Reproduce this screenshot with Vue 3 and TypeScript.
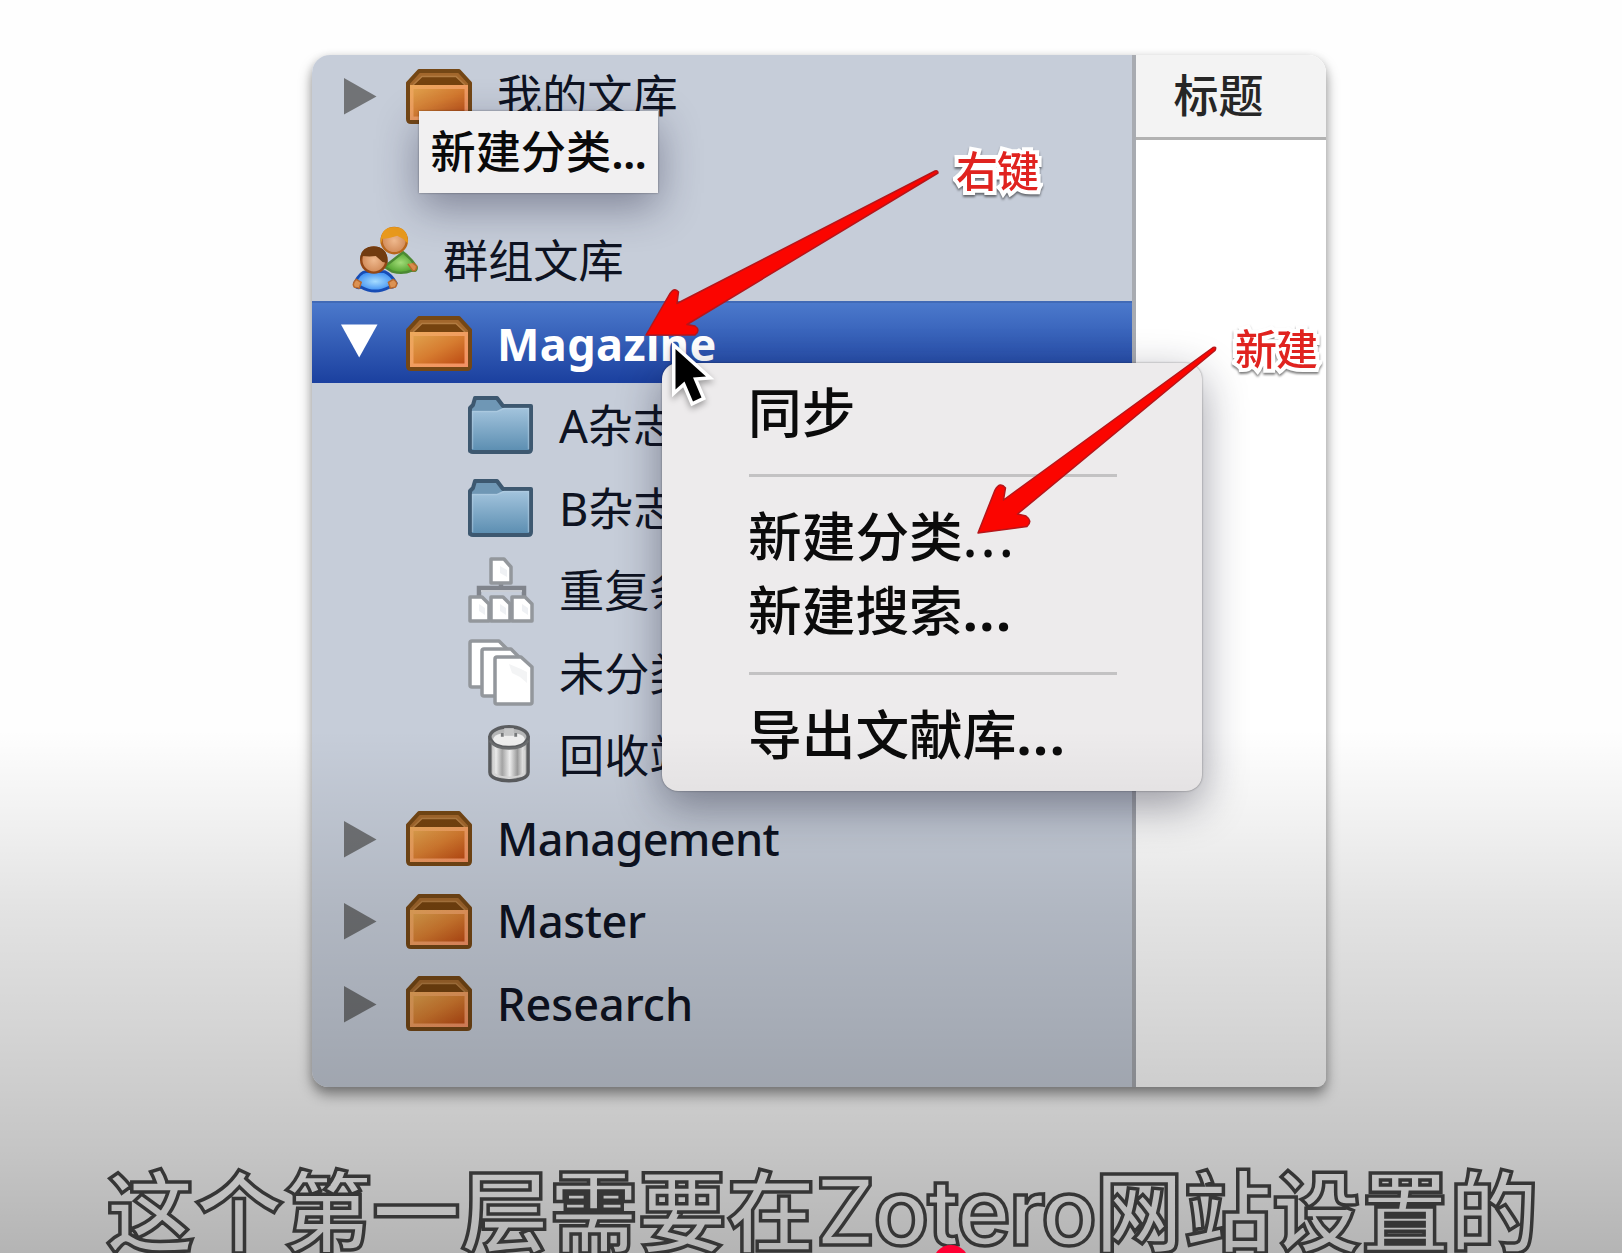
<script setup lang="ts">
type IconKind = 'box' | 'folder' | 'duplicates' | 'unfiled' | 'trash' | 'group' | 'none'

interface Row {
  label: string
  icon: IconKind
  level: 'root' | 'child' | 'group' | 'blank'
  twisty?: 'closed' | 'open'
  tracking?: number
}

const rows: Row[] = [
  { label: '我的文库', icon: 'box', level: 'root', twisty: 'closed' },
  { label: '', icon: 'none', level: 'blank' },
  { label: '群组文库', icon: 'group', level: 'group' },
  { label: 'Magazine', icon: 'box', level: 'root', twisty: 'open', tracking: 0.4 },
  { label: 'A杂志', icon: 'folder', level: 'child' },
  { label: 'B杂志', icon: 'folder', level: 'child' },
  { label: '重复条目', icon: 'duplicates', level: 'child' },
  { label: '未分类条目', icon: 'unfiled', level: 'child' },
  { label: '回收站', icon: 'trash', level: 'child' },
  { label: 'Management', icon: 'box', level: 'root', twisty: 'closed', tracking: -0.65 },
  { label: 'Master', icon: 'box', level: 'root', twisty: 'closed', tracking: -0.4 },
  { label: 'Research', icon: 'box', level: 'root', twisty: 'closed', tracking: 0 },
]
</script>

<template>
  <div class="stage">
    <svg class="defs" width="0" height="0" aria-hidden="true">
      <defs>
        <linearGradient id="boxFront" x1="0" y1="0" x2="1" y2="1">
          <stop offset="0" stop-color="#e0a04c" />
          <stop offset="0.5" stop-color="#d67c30" />
          <stop offset="1" stop-color="#bd4c14" />
        </linearGradient>
        <linearGradient id="boxRim" x1="0" y1="0" x2="1" y2="1">
          <stop offset="0" stop-color="#eda95c" />
          <stop offset="1" stop-color="#f39064" />
        </linearGradient>
        <linearGradient id="folderFill" x1="0" y1="0" x2="0" y2="1">
          <stop offset="0" stop-color="#a3c4dd" />
          <stop offset="1" stop-color="#5d8fb2" />
        </linearGradient>
        <linearGradient id="canFill" x1="0" y1="0" x2="1" y2="0">
          <stop offset="0" stop-color="#aaa" />
          <stop offset="0.16" stop-color="#eee" />
          <stop offset="0.32" stop-color="#a6a6a6" />
          <stop offset="0.52" stop-color="#f1f1f1" />
          <stop offset="0.72" stop-color="#9c9c9c" />
          <stop offset="0.86" stop-color="#e5e5e5" />
          <stop offset="1" stop-color="#999" />
        </linearGradient>
        <radialGradient id="blueShirt">
          <stop offset="0" stop-color="#a5dcff" />
          <stop offset="1" stop-color="#3c8df2" />
        </radialGradient>
        <radialGradient id="greenShirt">
          <stop offset="0" stop-color="#a2dc78" />
          <stop offset="1" stop-color="#4fa02c" />
        </radialGradient>
        <radialGradient id="face">
          <stop offset="0" stop-color="#efb98e" />
          <stop offset="1" stop-color="#d18a58" />
        </radialGradient>
      </defs>
    </svg>

    <div class="window">
      <aside class="sidebar">
        <div
          v-for="(row, i) in rows"
          :key="i"
          class="row"
          :class="[row.level, { selected: row.twisty === 'open', latin: row.tracking !== undefined }]"
        >
          <span v-if="row.level === 'root'" class="twisty">
            <svg v-if="row.twisty === 'closed'" width="37" height="38" viewBox="0 0 37 38">
              <path d="M2 1 L34.500 19.500 L2 37.500 Z" fill="#717376" />
            </svg>
            <svg v-else class="open" width="37" height="38" viewBox="0 0 37 38">
              <path d="M0 1.500 H36.500 L18.200 34.500 Z" fill="#fff" />
            </svg>
          </span>

          <svg v-if="row.icon === 'box'" class="icon" width="68" height="56" viewBox="0 0 68 56">
            <path d="M14 2 H54 L65 14 V50 Q65 53 62 53 H6 Q3 53 3 50 V14 Z" fill="#a2672c" stroke="#744715" stroke-width="4" stroke-linejoin="round" />
            <path d="M17 8 H51 L60 16 H8 Z" fill="#75430f" />
            <path d="M8 16 L17 7.500 H51 L60 16" fill="none" stroke="#b27c42" stroke-width="1.500" />
            <rect x="5" y="16" width="58" height="35" fill="url(#boxRim)" />
            <rect x="8.500" y="20" width="51" height="27.500" fill="url(#boxFront)" />
          </svg>

          <svg v-else-if="row.icon === 'folder'" class="icon" width="68" height="62" viewBox="0 0 68 62">
            <path d="M3 57 V14 L6 11 L8 4 H30 L36 12 H64 V55 Q64 58 61 58 H6 Q3 58 3 55 Z" fill="#6f97b5" stroke="#3d5870" stroke-width="4" stroke-linejoin="round" />
            <path d="M5 17 H30 L36 14 H62 V56 H5 Z" fill="url(#folderFill)" />
            <path d="M5.500 55 V17.500 H30 L37 14.500 H61.500 V55" fill="none" stroke="#b7d2e5" stroke-width="1.500" opacity="0.5" />
          </svg>

          <svg v-else-if="row.icon === 'duplicates'" class="icon" width="68" height="68" viewBox="0 0 68 68">
            <path d="M12 40 V32 H34 V26 M34 32 H57 V40" fill="none" stroke="#80848c" stroke-width="4.500" />
            <path d="M14 35 H55" stroke="#c9cdd4" stroke-width="2" />
            <g fill="#fff" stroke="#93979c" stroke-width="3.500" stroke-linejoin="round">
              <path d="M24 3 H37 L44 11 V27 H24 Z" />
              <path d="M3 41 H15 L22 48 V65 H3 Z" />
              <path d="M24 41 H36 L43 48 V65 H24 Z" />
              <path d="M45 41 H58 L65 48 V65 H45 Z" />
            </g>
            <g fill="#eff1f4">
              <path d="M33 10 L40 14 V21 L33 17 Z" />
              <path d="M12 48 L18 52 V59 L12 55 Z" />
              <path d="M33 48 L39 52 V59 L33 55 Z" />
              <path d="M55 48 L61 52 V59 L55 55 Z" />
            </g>
          </svg>

          <svg v-else-if="row.icon === 'unfiled'" class="icon" width="68" height="68" viewBox="0 0 68 68">
            <g fill="#fff" stroke="#93979c" stroke-width="3.500" stroke-linejoin="round">
              <path d="M5 2 H32 L41 11 V48 H5 Q3 48 3 46 V4 Q3 2 5 2 Z" />
              <path d="M17 10 H44 L53 19 V57 H17 Q15 57 15 55 V12 Q15 10 17 10 Z" />
              <path d="M30 18 H54 L65 28 V63 Q65 65 63 65 H30 Q28 65 28 63 V20 Q28 18 30 18 Z" />
            </g>
            <path d="M42 25 L54 30 L60 33 V44 L53 38 L45 34 Z" fill="#f3f4f5" />
          </svg>

          <svg v-else-if="row.icon === 'trash'" class="icon can" width="44" height="60" viewBox="0 0 46 62">
            <path d="M3 12 V50 C3 62 43 62 43 50 V12" fill="url(#canFill)" stroke="#5b5d60" stroke-width="3.500" />
            <path d="M7 27 V51 C12 57 34 57 39 51 V27" fill="none" stroke="#d9d9d9" stroke-width="2" />
            <ellipse cx="23" cy="13" rx="20" ry="10.500" fill="#b4b5b6" stroke="#5b5d60" stroke-width="3.500" />
            <ellipse cx="23" cy="15.500" rx="16.500" ry="7" fill="#eee" />
            <path d="M16 13 V9 M30 13 V9" fill="none" stroke="#77797b" stroke-width="3" />
            <path d="M18 4 H28 V12 H18 Z" fill="#c5c6c7" />
            <path d="M3 17 C8 28 38 28 43 17" fill="none" stroke="#6c6e70" stroke-width="2.500" />
          </svg>

          <svg v-else-if="row.icon === 'group'" class="icon" width="69" height="68" viewBox="0 0 70 70">
            <path d="M34 42 L53 27 Q61 33 67 42 Q68 47 62 46 Q53 50 42 47 Z" fill="url(#greenShirt)" stroke="#4c8934" stroke-width="2.500" />
            <path d="M58 39 L63 46 Q67 47 67 41 L63 38" fill="#d78b4c" stroke="#b66b2c" stroke-width="1.500" />
            <circle cx="44" cy="15" r="13" fill="url(#face)" stroke="#b8661c" stroke-width="2.500" />
            <path d="M30 19 Q29 1 44 1 Q59 1 58 18 L53 13 L47 10 Q38 13 32 13 Z" fill="#e8991c" />
            <path d="M3 59 Q9 47 15 47 H34 Q41 50 46 59 Q44 64 39 63 Q24 71 10 63 Q4 65 3 59 Z" fill="url(#blueShirt)" stroke="#174cb5" stroke-width="3" />
            <path d="M3 63 Q0 59 5 55 L10 58 L8 64 Z M45 63 Q49 58 43 55 L38 58 L40 64 Z" fill="#dc9253" stroke="#b8672b" stroke-width="1.500" />
            <circle cx="23" cy="35" r="13" fill="url(#face)" stroke="#934716" stroke-width="2.500" />
            <path d="M9 36 Q8 21 23 21 Q38 21 37 38 L32 37 L25 31 Q19 32 11 31 Z" fill="#713b10" />
          </svg>

          <span class="label" :style="{ letterSpacing: (row.tracking ?? 0) + 'px' }">{{ row.label }}</span>
        </div>
      </aside>
      <main class="items">
        <header class="column-head">标题</header>
      </main>
    </div>

    <div class="tooltip">新建分类<span class="dots">...</span></div>

    <div class="menu">
      <div class="entry">同步</div>
      <hr />
      <div class="entry">新建分类<span class="dots wide">...</span></div>
      <div class="entry">新建搜索<span class="dots">...</span></div>
      <hr />
      <div class="entry">导出文献库<span class="dots">...</span></div>
    </div>

    <svg class="overlay" width="1622" height="1253" viewBox="0 0 1622 1253">
      <path class="pointer" d="M675.500 349 V389.500 L684.500 381.500 L693 401.500 L701.500 397.500 L693 377.500 L706 376.500 Z" />
      <g class="arrow">
        <path d="M646 335 L668.500 296 Q674 286 678.500 292 L677 303.500 L935 171 Q938 170 938 173 L687 324.500 L695 326 Q701 330 695 335 Z" />
        <path d="M978 533 L995 490 Q1000 481 1005.500 488 L1003.500 500 L1213 347.500 Q1217 346 1215 350.500 L1017.500 514 L1026 516 Q1033 521 1027 526.500 Z" />
      </g>
    </svg>
    <div class="note right-click">右键</div>
    <div class="note create">新建</div>

    <div class="shade"></div>
    <div class="caption">这个第一层需要在<span class="brand">Zotero</span>网站设置的</div>
    <div class="playhead"></div>
  </div>
</template>

<style>
html,
body {
  margin: 0;
  background: #fff;
}
</style>

<style scoped>
.stage {
  position: relative;
  width: 1622px;
  height: 1253px;
  overflow: hidden;
  background: #fefefe;
  font-family: 'Noto Sans', 'Noto Sans CJK SC', sans-serif;
  display: flex;
  justify-content: flex-start;
  align-items: flex-start;
}
.defs {
  position: absolute;
}
.window {
  display: flex;
  width: 1014px;
  height: 1032px;
  margin: 55px 0 0 312px;
  border-radius: 18px 18px 9px 16px;
  overflow: hidden;
  box-shadow: 0 8px 14px rgba(0, 0, 0, 0.38), 0 2px 8px rgba(0, 0, 0, 0.14);
}
.sidebar {
  width: 820px;
  flex: none;
  border-right: 4px solid #a8abb1;
  background: #c6cdd9;
  display: flex;
  flex-direction: column;
}
.row {
  height: 82.5px;
  flex: none;
  display: flex;
  align-items: center;
  box-sizing: border-box;
  white-space: nowrap;
  color: #0e1322;
  font-size: 45.2px;
  line-height: 82px;
}
.row:first-child {
  margin-top: -1px;
}
.root {
  padding-left: 30px;
}
.twisty {
  width: 62.500px;
  display: flex;
  margin-top: 2px;
}
.twisty .open {
  margin: -4px 0 0 -1.500px;
}
.child {
  padding-left: 155px;
}
.group {
  padding-left: 39px;
}
.root .icon {
  margin-top: 3px;
}
.label {
  padding-top: 2px;
}
.root .label {
  margin-left: 24.500px;
}
.child .label {
  margin-left: 24px;
}
.child .can {
  margin: -2px 4px 0 20px;
}
.group .icon {
  margin-top: -1px;
}
.group .label {
  margin-left: 23px;
}
.latin .label {
  font-size: 45px;
  font-weight: 500;
}
.selected {
  color: #fff;
  background: linear-gradient(#4b79cc, #1b409f);
  border-top: 2px solid #416ab6;
  margin-top: -1px;
  margin-bottom: 1px;
}
.selected .label {
  font-weight: 700;
}
.items {
  flex: 1;
  background: #fff;
}
.column-head {
  height: 82px;
  box-sizing: content-box;
  border-bottom: 3px solid #b2b2b2;
  background: #f3f3f3;
  padding-left: 37.500px;
  font-size: 45px;
  font-weight: 500;
  line-height: 81px;
  color: #262626;
}
.tooltip {
  position: absolute;
  left: 419px;
  top: 111px;
  width: 227px;
  height: 82px;
  padding-left: 11.500px;
  box-sizing: content-box;
  background: #f1f0f1;
  box-shadow: 0 0 2px rgba(0, 0, 0, 0.4), 0 14px 42px rgba(30, 30, 60, 0.42);
  font-size: 45.2px;
  font-weight: 500;
  line-height: 82px;
  color: #0a0a0a;
  white-space: nowrap;
}
.tooltip .dots {
  font-weight: 600;
  letter-spacing: -0.8px;
}
.menu {
  position: absolute;
  left: 662px;
  top: 363px;
  width: 540px;
  height: 428px;
  box-sizing: border-box;
  padding: 13px 85px 0 87px;
  border-radius: 16px;
  background: #edebec;
  box-shadow: 0 0 2px rgba(0, 0, 0, 0.45), 0 14px 44px rgba(20, 20, 40, 0.42);
  color: #0b0b0b;
  font-size: 53.700px;
  font-weight: 500;
}
.entry {
  height: 74px;
  line-height: 74px;
  white-space: nowrap;
  margin-left: -1px;
}
.menu hr {
  height: 3px;
  margin: 23.500px 0 23.500px;
  border: 0;
  background: #c3c2c3;
}
.menu .dots {
  font-weight: 700;
  letter-spacing: 1.500px;
}
.menu .dots.wide {
  font-weight: 500;
  letter-spacing: 3.500px;
}
.overlay {
  position: absolute;
  inset: 0;
}
.pointer {
  fill: #000;
  stroke: #fff;
  stroke-width: 7px;
  paint-order: stroke;
  filter: drop-shadow(0 3px 3px rgba(0, 0, 0, 0.35));
}
.arrow {
  fill: #fb0500;
  stroke: #b5161a;
  stroke-width: 1.500px;
  stroke-linejoin: round;
}
.note {
  position: absolute;
  font-size: 42px;
  line-height: 60px;
  font-weight: 500;
  letter-spacing: -1px;
  color: #e0231f;
  -webkit-text-stroke: 8px #fff;
  paint-order: stroke fill;
  filter: drop-shadow(0 2px 1px rgba(0, 0, 0, 0.5));
}
.right-click {
  left: 956px;
  top: 141px;
}
.create {
  left: 1235px;
  top: 319px;
}
.shade {
  position: absolute;
  inset: 730px 0 0 0;
  background: linear-gradient(
    rgba(0, 0, 0, 0),
    rgba(0, 0, 0, 0.055) 93px,
    rgba(0, 0, 0, 0.11) 183px,
    rgba(0, 0, 0, 0.165) 300px,
    rgba(0, 0, 0, 0.225) 418px,
    rgba(0, 0, 0, 0.29) 523px
  );
}
.caption {
  position: absolute;
  left: 106px;
  top: 1142px;
  font-size: 88.700px;
  line-height: 130px;
  font-weight: 700;
  white-space: nowrap;
  color: rgba(255, 255, 255, 0.04);
  -webkit-text-stroke: 3.500px #363636;
  font-family: 'Noto Sans CJK SC', sans-serif;
}
.brand {
  font-family: Inter, sans-serif;
  font-weight: 600;
  font-size: 92px;
  letter-spacing: -2.200px;
}
.playhead {
  position: absolute;
  left: 933px;
  top: 1245px;
  width: 36px;
  height: 36px;
  border-radius: 50%;
  background: #ff0033;
}
</style>
